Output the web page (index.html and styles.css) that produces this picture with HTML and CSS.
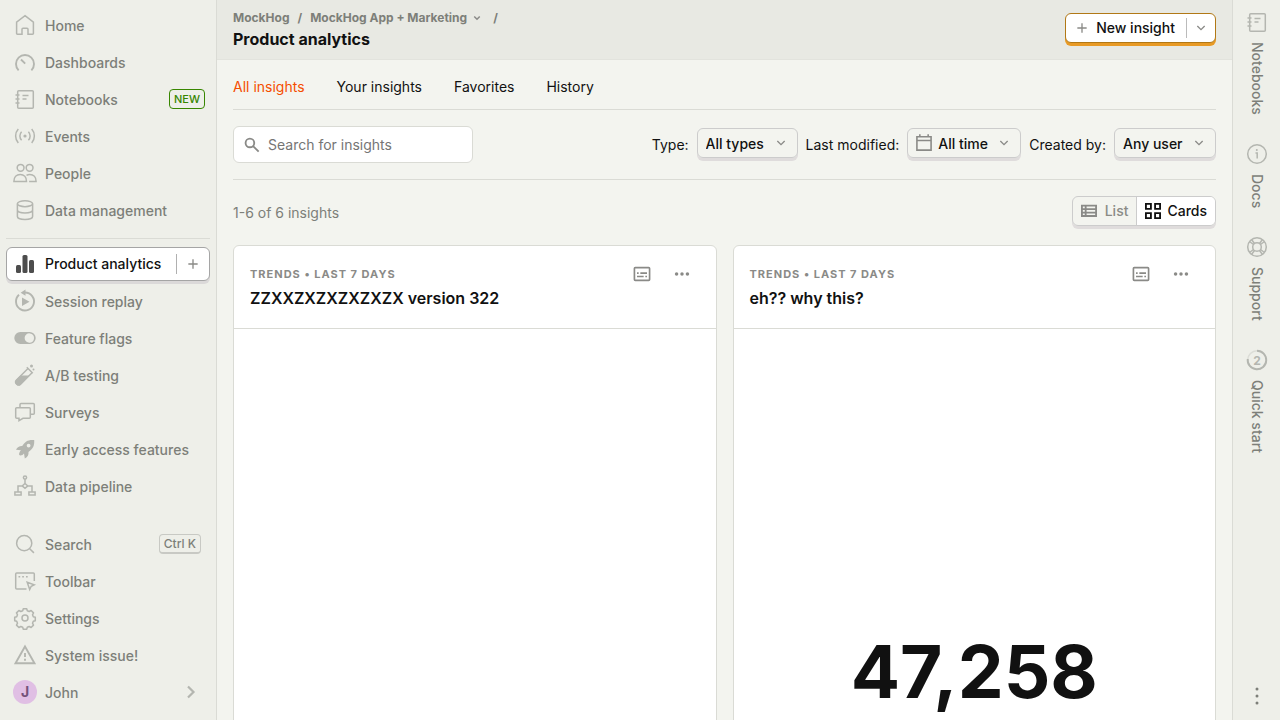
FILE: index.html
```html
<!DOCTYPE html>
<html lang="en">
<head>
<meta charset="utf-8">
<meta name="viewport" content="width=device-width, initial-scale=1">
<title>Product analytics</title>
<link rel="stylesheet" href="styles.css">
</head>
<body>
<svg class="sprite" aria-hidden="true">
  <symbol id="notebook" viewBox="0 0 24 24"><rect x="4.700" y="3.700" width="15.600" height="17.600" rx="1"/><path d="M2.500 8h4M2.500 12h4M2.500 16h4M9.500 8.500h6M9.500 12h4"/></symbol>
  <symbol id="chevron" viewBox="0 0 24 24"><path d="M6.500 9l5.500 5.500L17.500 9"/></symbol>
  <symbol id="plus" viewBox="0 0 24 24"><path d="M12 5v14M5 12h14"/></symbol>
  <symbol id="details" viewBox="0 0 24 24"><rect x="2.900" y="4.400" width="18.200" height="15.200" rx="1"/><path d="M6 11h2M10 11h8M6 15h8M16 15h2"/></symbol>
  <symbol id="dots" viewBox="0 0 24 24"><g class="solid"><circle cx="5.500" cy="12" r="2.100"/><circle cx="12" cy="12" r="2.100"/><circle cx="18.500" cy="12" r="2.100"/></g></symbol>
</svg>

<nav class="sidebar" aria-label="Main">
  <ul class="nav-list">
    <li><a class="nav-item" href="#"><svg class="icon" viewBox="0 0 24 24"><path d="M12 2.700l8.400 6.400v11.400a.8.8 0 0 1-.8.8H15v-5a1 1 0 0 0-1-1h-4a1 1 0 0 0-1 1v5H4.400a.8.8 0 0 1-.8-.8V9.100z"/></svg>Home</a></li>
    <li><a class="nav-item" href="#"><svg class="icon" viewBox="0 0 24 24"><path class="bold" d="M5.600 20.300A9 9 0 1 1 18.400 20.300M8 9.500l4.200 4.200"/></svg>Dashboards</a></li>
    <li><a class="nav-item" href="#"><svg class="icon"><use href="#notebook"/></svg>Notebooks<span class="tag">NEW</span></a></li>
    <li><a class="nav-item" href="#"><svg class="icon" viewBox="0 0 24 24"><path d="M5.300 5a10.500 10.500 0 0 0 0 14M18.700 5a10.500 10.500 0 0 1 0 14M8.600 7.800a6 6 0 0 0 0 8.400M15.400 7.800a6 6 0 0 1 0 8.400"/><circle class="solid" cx="12" cy="12" r="1.600"/></svg>Events</a></li>
    <li><a class="nav-item" href="#"><svg class="icon" viewBox="0 0 24 24"><circle cx="7.600" cy="6.800" r="3.400"/><circle cx="16.600" cy="6.800" r="3.400"/><path d="M.9 20.400c0-4.200 2.600-7 6.300-7s6.300 2.800 6.300 7zM13.500 14.400c1-.7 2.100-1 3.300-1 3.700 0 6.300 2.800 6.300 7h-7"/></svg>People</a></li>
    <li><a class="nav-item" href="#"><svg class="icon" viewBox="0 0 24 24"><ellipse cx="12" cy="5.700" rx="7.600" ry="3"/><path d="M4.400 5.700v12.800c0 1.700 3.400 3 7.600 3s7.600-1.300 7.600-3V5.700M4.400 12c0 1.700 3.400 3 7.600 3s7.600-1.300 7.600-3"/></svg>Data management</a></li>
  </ul>
  <hr class="nav-rule">
  <ul class="nav-list">
    <li class="nav-active"><a class="nav-item" href="#" aria-current="page"><svg class="icon" viewBox="0 0 24 24"><g class="solid"><rect x="3" y="13" width="5" height="8" rx="1.500"/><rect x="9.500" y="3" width="5" height="18" rx="1.500"/><rect x="16" y="8" width="5" height="13" rx="1.500"/></g></svg>Product analytics</a><button class="nav-add" aria-label="New insight"><svg class="icon-sm"><use href="#plus"/></svg></button></li>
    <li><a class="nav-item" href="#"><svg class="icon" viewBox="0 0 24 24"><path class="bold" d="M6 5.800A9 9 0 1 0 12 3.500h-1"/><path class="solid" d="M12.500.6v6.200L7.600 3.700zM9 8.500l7.500 4.200L9 17z"/></svg>Session replay</a></li>
    <li><a class="nav-item" href="#"><svg class="icon" viewBox="0 0 24 24"><path class="solid" fill-rule="evenodd" d="M7.300 6h9.400a6 6 0 0 1 0 12H7.300a6 6 0 0 1 0-12zM17 7.400a4.700 4.700 0 1 0 0 9.300 4.700 4.700 0 0 0 0-9.300z"/></svg>Feature flags</a></li>
    <li><a class="nav-item" href="#"><svg class="icon" viewBox="0 0 24 24"><path d="M13.800 4.200l6 6M15 5.500L3.500 17a2.900 2.900 0 0 0 4.100 4.100L18.800 10"/><path class="solid" d="M7.500 12.500h9l-8.600 8.900a3.300 3.300 0 0 1-4.700-4.700z"/><circle class="solid" cx="18.500" cy="3" r="1.500"/><circle class="solid" cx="20.500" cy="6.500" r="1"/></svg>A/B testing</a></li>
    <li><a class="nav-item" href="#"><svg class="icon" viewBox="0 0 24 24"><path d="M7 7.700V4.500a1 1 0 0 1 1-1h12.300a1 1 0 0 1 1 1v8.800a1 1 0 0 1-1 1H17M3.700 7.700h12.600a1 1 0 0 1 1 1v8.600a1 1 0 0 1-1 1H10L6 20.600v-2.300H3.700a1 1 0 0 1-1-1V8.700a1 1 0 0 1 1-1z"/></svg>Surveys</a></li>
    <li><a class="nav-item" href="#"><svg class="icon" viewBox="0 0 24 24"><path class="solid" fill-rule="evenodd" d="M21.200 3c-6-.6-9.300 1.400-12 6C6.500 8.800 4.500 10 3 12.700l5 .5c-1 1-1.800 2.300-2 4.400l1 .8c2 .1 3-.9 4-2l.8 5.100c3-1.800 4-3.800 3.700-6.600C20 12 21.600 8.500 21.200 3zM15.600 6.700a1.900 1.900 0 1 1 0 3.800 1.900 1.900 0 0 1 0-3.800z"/></svg>Early access features</a></li>
    <li><a class="nav-item" href="#"><svg class="icon" viewBox="0 0 24 24"><circle cx="12" cy="3.500" r="1.600"/><path d="M12 5.100v4.400M12 9.500l2.800 2.400-2.800 2.400-2.800-2.400zM9.200 11.900H5v6M14.800 11.900H19v6M1.900 18h6.200v3H1.900zM15.900 18h6.200v3h-6.200z"/></svg>Data pipeline</a></li>
  </ul>
  <ul class="nav-list nav-bottom">
    <li><a class="nav-item" href="#"><svg class="icon" viewBox="0 0 24 24"><circle cx="11.200" cy="11.200" r="7.600"/><path d="M16.700 16.700l4.200 4.200"/></svg>Search<kbd class="keys">Ctrl K</kbd></a></li>
    <li><a class="nav-item" href="#"><svg class="icon" viewBox="0 0 24 24"><path d="M21.300 12V5a1 1 0 0 0-1-1H3.700a1 1 0 0 0-1 1v14a1 1 0 0 0 1 1h9.800M14.200 13.200l7 2.600-3 1.500-1.500 3.200z"/><path d="M5.500 7.700h1.700M9.200 7.700h1.700M13 7.700h1.700"/></svg>Toolbar</a></li>
    <li><a class="nav-item" href="#"><svg class="icon" viewBox="0 0 24 24"><circle cx="12" cy="12" r="3"/><path stroke-linejoin="round" d="M10.300 2.700h3.400l.6 2 1.900.8 1.900-1 2.400 2.400-1 1.900.8 1.900 2 .6v3.400l-2 .6-.8 1.900 1 1.900-2.400 2.400-1.900-1-1.900.8-.6 2h-3.400l-.6-2-1.900-.8-1.900 1-2.400-2.400 1-1.900-.8-1.900-2-.6v-3.400l2-.6.8-1.900-1-1.900 2.400-2.400 1.900 1 1.900-.8z"/></svg>Settings</a></li>
    <li><a class="nav-item" href="#"><svg class="icon" viewBox="0 0 24 24"><path class="bold" d="M12 3.500L21.500 20.200h-19zM12 10v4M12 15.800v2"/></svg>System issue!</a></li>
    <li><a class="nav-item" href="#"><span class="avatar">J</span>John<svg class="icon nav-more" viewBox="0 0 24 24"><path class="heavy" d="M9 6.500l5.500 5.500L9 17.500"/></svg></a></li>
  </ul>
</nav>

<main class="main">
  <header class="topbar">
    <div>
      <nav class="crumbs" aria-label="Breadcrumb"><a href="#">MockHog</a><span>/</span><button class="crumb-button">MockHog App + Marketing<svg class="icon-sm"><use href="#chevron"/></svg></button><span>/</span></nav>
      <h1 class="title">Product analytics</h1>
    </div>
    <div class="raised new-insight">
      <button class="new-main"><svg class="icon-sm"><use href="#plus"/></svg>New insight</button>
      <button class="new-more" aria-label="More insight types"><svg class="icon-sm"><use href="#chevron"/></svg></button>
    </div>
  </header>
  <div class="content">
    <nav class="tabs" aria-label="Insights"><a class="tab tab-on" href="#" aria-current="page">All insights</a><a class="tab" href="#">Your insights</a><a class="tab" href="#">Favorites</a><a class="tab" href="#">History</a></nav>
    <div class="filters">
      <label class="search"><svg class="icon-md" viewBox="0 0 24 24"><circle class="heavy" cx="9.500" cy="9.500" r="5.200"/><path class="heavy" d="M13.300 13.300l6.700 6.700"/></svg><input type="search" placeholder="Search for insights" aria-label="Search for insights"></label>
      <div class="filter-group">
        <label for="type">Type:</label>
        <div class="raised pick"><select id="type"><option>All types</option></select><svg class="icon-sm pick-arrow"><use href="#chevron"/></svg></div>
        <label for="modified">Last modified:</label>
        <div class="raised pick pick-date"><svg class="icon-md" viewBox="0 0 24 24"><path class="bold" d="M3.500 4.500h17v16h-17zM3.500 9h17M7 1.500v3M17 1.500v3"/></svg><select id="modified"><option>All time</option></select><svg class="icon-sm pick-arrow"><use href="#chevron"/></svg></div>
        <label for="creator">Created by:</label>
        <div class="raised pick"><select id="creator"><option>Any user</option></select><svg class="icon-sm pick-arrow"><use href="#chevron"/></svg></div>
      </div>
    </div>
    <div class="results">
      <span class="count">1-6 of 6 insights</span>
      <div class="raised views" role="group" aria-label="View">
        <button class="view" aria-pressed="false"><svg class="icon-md" viewBox="0 0 24 24"><path class="heavy" d="M3.500 5.500h17v12.500h-17zM3.500 9.700h17M3.500 13.900h17M8 5.500v12.500"/></svg>List</button>
        <button class="view view-on" aria-pressed="true"><svg class="icon-md" viewBox="0 0 24 24"><path class="heavy" d="M3.500 3.500h6v6h-6zM14.500 3.500h6v6h-6zM3.500 14.500h6v6h-6zM14.500 14.500h6v6h-6z"/></svg>Cards</button>
      </div>
    </div>
    <div class="cards">
      <article class="card">
        <header class="card-head">
          <div class="card-meta"><span class="card-kind">TRENDS • LAST 7 DAYS</span><button class="card-action" aria-label="Show details"><svg class="icon-md"><use href="#details"/></svg></button><button class="card-action" aria-label="More"><svg class="icon-md"><use href="#dots"/></svg></button></div>
          <h2 class="card-title">ZZXXZXZXZXZXZX version 322</h2>
        </header>
        <div class="card-body"></div>
      </article>
      <article class="card">
        <header class="card-head">
          <div class="card-meta"><span class="card-kind">TRENDS • LAST 7 DAYS</span><button class="card-action" aria-label="Show details"><svg class="icon-md"><use href="#details"/></svg></button><button class="card-action" aria-label="More"><svg class="icon-md"><use href="#dots"/></svg></button></div>
          <h2 class="card-title">eh?? why this?</h2>
        </header>
        <div class="card-body"><strong class="figure">47,258</strong></div>
      </article>
    </div>
  </div>
</main>

<aside class="rail" aria-label="Side panel">
  <button class="rail-item"><svg class="icon"><use href="#notebook"/></svg><span>Notebooks</span></button>
  <button class="rail-item"><svg class="icon" viewBox="0 0 24 24"><circle cx="12" cy="12" r="9.300"/><path d="M10.500 11h1.700v5.500"/><circle class="solid" cx="11.800" cy="8" r="1"/></svg><span>Docs</span></button>
  <button class="rail-item"><svg class="icon" viewBox="0 0 24 24"><circle cx="12" cy="12" r="9.300"/><circle cx="12" cy="12" r="4.300"/><path d="M4.500 6.500l4 3M6.500 4.500l3 4M17.500 4.500l-3 4M19.500 6.500l-4 3M4.500 17.500l4-3M6.500 19.500l3-4M17.500 19.500l-3-4M19.500 17.500l-4-3"/></svg><span>Support</span></button>
  <button class="rail-item"><svg class="icon" viewBox="0 0 24 24"><circle class="track" cx="12" cy="12" r="9.300"/><path class="bold" d="M12 2.700A9.300 9.300 0 1 1 2.700 11"/><text class="step" x="12" y="16.500">2</text></svg><span>Quick start</span></button>
  <button class="rail-item rail-more" aria-label="More"><svg class="icon" viewBox="0 0 24 24"><g class="solid"><circle cx="12" cy="5" r="1.500"/><circle cx="12" cy="12" r="1.500"/><circle cx="12" cy="19" r="1.500"/></g></svg></button>
</aside>
</body>
</html>
```
FILE: styles.css
```css
* { box-sizing: border-box; }
body {
  margin: 0;
  display: flex;
  height: 100vh;
  overflow: hidden;
  background: #f3f4ef;
  color: #111;
  font: 14px/20px Inter, "Liberation Sans", sans-serif;
  font-optical-sizing: none;
}
button, select, input { font: inherit; font-optical-sizing: none; color: inherit; border: 0; padding: 0; margin: 0; background: none; }
button { cursor: pointer; }
a { color: inherit; text-decoration: none; }
ul { list-style: none; margin: 0; padding: 0; }
h1, h2 { margin: 0; }
svg { fill: none; stroke: currentColor; stroke-width: 1.5; flex: none; }
.sprite { display: none; }
.solid { fill: currentColor; stroke: none; }
.bold { stroke-width: 1.9; }
.heavy { stroke-width: 2.2; }
.icon { width: 24px; height: 24px; color: #b4b6b0; }
.icon-md { width: 20px; height: 20px; color: #8a8a87; stroke-width: 2; }
.icon-sm { width: 16px; height: 16px; color: #8a8a87; stroke-width: 2; }

.sidebar {
  flex: none;
  display: flex;
  flex-direction: column;
  width: 217px;
  padding: 7px 6px 9px;
  background: #eeefe9;
  border-right: 1px solid #dadbd5;
}
.nav-item {
  display: flex;
  align-items: center;
  gap: 8px;
  height: 37px;
  padding: 0 4px 0 7px;
  font-weight: 500;
  color: #7d7f79;
}
.nav-item .icon { margin-bottom: 2px; }
.nav-rule { width: 100%; margin: 9px 0 8px; border: 0; border-top: 1px solid #dadbd5; }
.nav-active {
  display: flex;
  align-items: center;
  height: 34px;
  margin-bottom: 2px;
  background: #fff;
  border: 1px solid #a5a5a5;
  border-radius: 6px;
  box-shadow: 0 3px 0 #dbd9d9;
}
.nav-active .nav-item { flex: 1; height: 32px; padding: 0 0 0 6px; color: #111; }
.nav-active .icon { margin: 0; color: #4d4d4d; }
.nav-add { display: flex; justify-content: center; width: 33px; padding: 2px 0; border-left: 1px solid #b0b0b0; }
.nav-bottom { margin-top: auto; }
.tag {
  margin: 0 1px 1px auto;
  padding: 0 4px;
  border: 1px solid #388600;
  border-radius: 4px;
  font-size: 11px;
  line-height: 18px;
  color: #388600;
}
.keys {
  margin: 0 5px 2px auto;
  padding: 0 4px;
  border: 1px solid #c8c9c4;
  border-bottom-width: 2px;
  border-radius: 4px;
  font: 500 12px/17px Inter, sans-serif;
}
.avatar {
  width: 24px;
  height: 24px;
  margin-bottom: 2px;
  border-radius: 50%;
  background: #e0bfe4;
  color: #74527a;
  font-weight: 700;
  line-height: 24px;
  text-align: center;
}
.nav-more { margin-left: auto; margin-right: 3px; }

.main { flex: 1; min-width: 0; overflow: hidden; }
.topbar {
  display: flex;
  align-items: center;
  justify-content: space-between;
  height: 60px;
  padding: 0 16px;
  background: #e8e9e3;
  border-bottom: 1px solid #e2e3dd;
}
.crumbs { display: flex; align-items: center; gap: 8px; font-size: 12px; line-height: 18px; font-weight: 700; color: #7d7f79; }
.crumb-button { display: flex; align-items: center; gap: 4px; font-weight: 700; }
.crumb-button .icon-sm { width: 12px; height: 12px; stroke-width: 3; }
.crumb-button + span { margin-left: 2px; }
.title { font-size: 16px; line-height: 24px; font-weight: 700; }

.raised {
  display: flex;
  align-items: center;
  height: 30px;
  margin-bottom: 3px;
  border: 1px solid #cccccc;
  border-radius: 6px;
  box-shadow: 0 3px 0 #dfdcdc;
}
.new-insight { background: #fff; border-color: #b17816; box-shadow: 0 3px 0 #e89a25; }
.new-main { display: flex; align-items: center; gap: 6px; padding: 0 11px 0 8px; font-weight: 500; }
.new-more { display: flex; padding: 2px 6px; border-left: 1px solid #bbb; }

.content { padding: 0 16px; }
.tabs { display: flex; gap: 32px; padding: 17px 0 12px; border-bottom: 1px solid #dadbd5; }
.tab-on { color: #f54e00; }
.filters {
  display: flex;
  align-items: center;
  justify-content: space-between;
  padding: 16px 0;
  border-bottom: 1px solid #dadbd5;
}
.search {
  display: flex;
  align-items: center;
  gap: 6px;
  width: 240px;
  height: 37px;
  padding: 0 8px;
  background: #fff;
  border: 1px solid #dadbd5;
  border-radius: 6px;
}
.search input { flex: 1; min-width: 0; outline: 0; appearance: none; }
.search input::placeholder { color: #757575; }
.filter-group { display: flex; align-items: center; gap: 8px; }
.pick { position: relative; gap: 4px; padding-left: 8px; }
.pick-date { padding-left: 6px; }
.pick select { padding: 2px 32px 0 0; appearance: none; font-weight: 500; }
.pick-date select { padding-left: 0; }
.pick-arrow { position: absolute; right: 8px; pointer-events: none; }
.results { display: flex; align-items: center; justify-content: space-between; padding: 16px 0; }
.count { color: #7d7f79; }
.view { display: flex; align-items: center; gap: 6px; height: 28px; padding: 0 8px 0 6px; font-weight: 500; color: #8a8b86; }
.view-on { gap: 4px; background: #fff; color: #111; border-left: 1px solid #ccc; border-radius: 0 5px 5px 0; }
.view-on .icon-md { color: #111; }

.cards { display: grid; grid-template-columns: 1fr 1fr; gap: 16px; }
.card { background: #fff; border: 1px solid #dadbd5; border-radius: 6px; }
.card-head { height: 83px; padding: 16px; border-bottom: 1px solid #dadbd5; }
.card-meta { display: flex; align-items: center; height: 24px; }
.card-kind { flex: 1; font-size: 11px; line-height: 16px; font-weight: 700; letter-spacing: 1px; color: #8a8a87; }
.card-action { display: flex; padding: 0 8px; margin-left: 4px; }
.card-title { font-size: 16px; line-height: 24px; font-weight: 600; }
.card-body { display: flex; align-items: center; justify-content: center; min-height: 686px; }
.figure { font-size: 73px; line-height: 90px; font-weight: 700; }

.rail {
  flex: none;
  display: flex;
  flex-direction: column;
  align-items: center;
  gap: 27px;
  width: 48px;
  padding: 10px 0 12px;
  background: #eeefe9;
  border-left: 1px solid #dadbd5;
}
.rail-item { display: flex; flex-direction: column; align-items: center; gap: 8px; font-weight: 500; color: #7d7f79; }
.rail-item span { writing-mode: vertical-rl; }
.track { stroke: #dcddd7; }
.step { fill: currentColor; stroke: none; font: 700 12px Inter, sans-serif; text-anchor: middle; }
.rail-more { margin-top: auto; }
.rail-more .icon { color: #7d7f79; }
```
